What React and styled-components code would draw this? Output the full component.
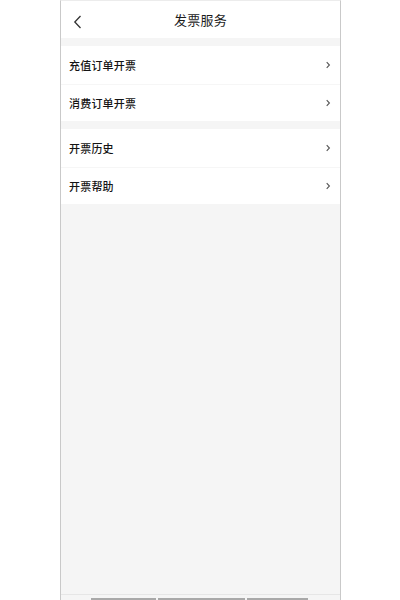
import React from 'react';
import styled, { createGlobalStyle } from 'styled-components';

const GlobalStyle = createGlobalStyle`
	html, body {
		margin: 0;
		padding: 0;
		background: #ffffff;
	}
	body {
		font-family: 'Noto Sans CJK SC', 'Noto Sans', sans-serif;
	}
`;

const Frame = styled.div`
	box-sizing: border-box;
	width: 281px;
	height: 600px;
	margin-left: 60px;
	border-left: 1px solid #c9c9c9;
	border-right: 1px solid #c9c9c9;
	border-top: 1px solid #ececec;
	background: #f5f5f5;
	display: flex;
	flex-direction: column;
`;

const Header = styled.div`
	height: 37px;
	background: #ffffff;
	display: flex;
	align-items: center;
	position: relative;
	justify-content: center;
`;

const Back = styled.div`
	position: absolute;
	left: 12px;
	top: 9px;
	width: 10px;
	height: 14px;
`;

const Title = styled.h1`
	margin: 0;
	font-size: 13px;
	font-weight: 400;
	color: #1c1c1c;
	letter-spacing: 0.3px;
`;

const Group = styled.div`
	margin-top: 8px;
	background: #ffffff;
`;

const Row = styled.div`
	height: 37.5px;
	display: flex;
	align-items: center;
	justify-content: space-between;
	padding: 0 9px 0 8px;
	border-top: ${(p) => (p.first ? 'none' : '1px solid #f6f6f6')};
	box-sizing: border-box;
`;

const Label = styled.span`
	font-size: 11px;
	color: #141414;
	letter-spacing: 0.2px;
	font-weight: 500;
`;

const Filler = styled.div`
	flex: 1;
`;

const Footer = styled.div`
	height: 6px;
	display: flex;
	flex-direction: column;
	justify-content: space-between;
`;

const FooterLine = styled.div`
	height: 1px;
	background: #e6e6e6;
`;

const Bars = styled.div`
	display: flex;
	gap: 2px;
	padding-left: 30px;
`;

const Bar = styled.div`
	height: 2px;
	width: ${(p) => p.w}px;
	background: #a9a9a9;
`;

const Chevron = () => (
	<svg width="6" height="8" viewBox="0 0 6 8">
		<polyline points="1.7,1.2 4.4,4 1.7,6.8" fill="none" stroke="#555" strokeWidth="1.1" />
	</svg>
);

const groups = [
	['充值订单开票', '消费订单开票'],
	['开票历史', '开票帮助'],
];

const App = () => {
	return (
		<>
			<GlobalStyle />
			<Frame>
				<Header>
					<Back>
						<svg width="10" height="14" viewBox="0 0 10 14">
							<polyline points="7.5,1 1.8,7 7.5,13" fill="none" stroke="#333" strokeWidth="1.3" />
						</svg>
					</Back>
					<Title>发票服务</Title>
				</Header>
				{groups.map((items, gi) => (
					<Group key={gi}>
						{items.map((label, i) => (
							<Row key={label} first={i === 0}>
								<Label>{label}</Label>
								<Chevron />
							</Row>
						))}
					</Group>
				))}
				<Filler />
				<Footer>
					<FooterLine />
					<Bars>
						<Bar w={65} />
						<Bar w={87} />
						<Bar w={61} />
					</Bars>
				</Footer>
			</Frame>
		</>
	);
};

export default App;
